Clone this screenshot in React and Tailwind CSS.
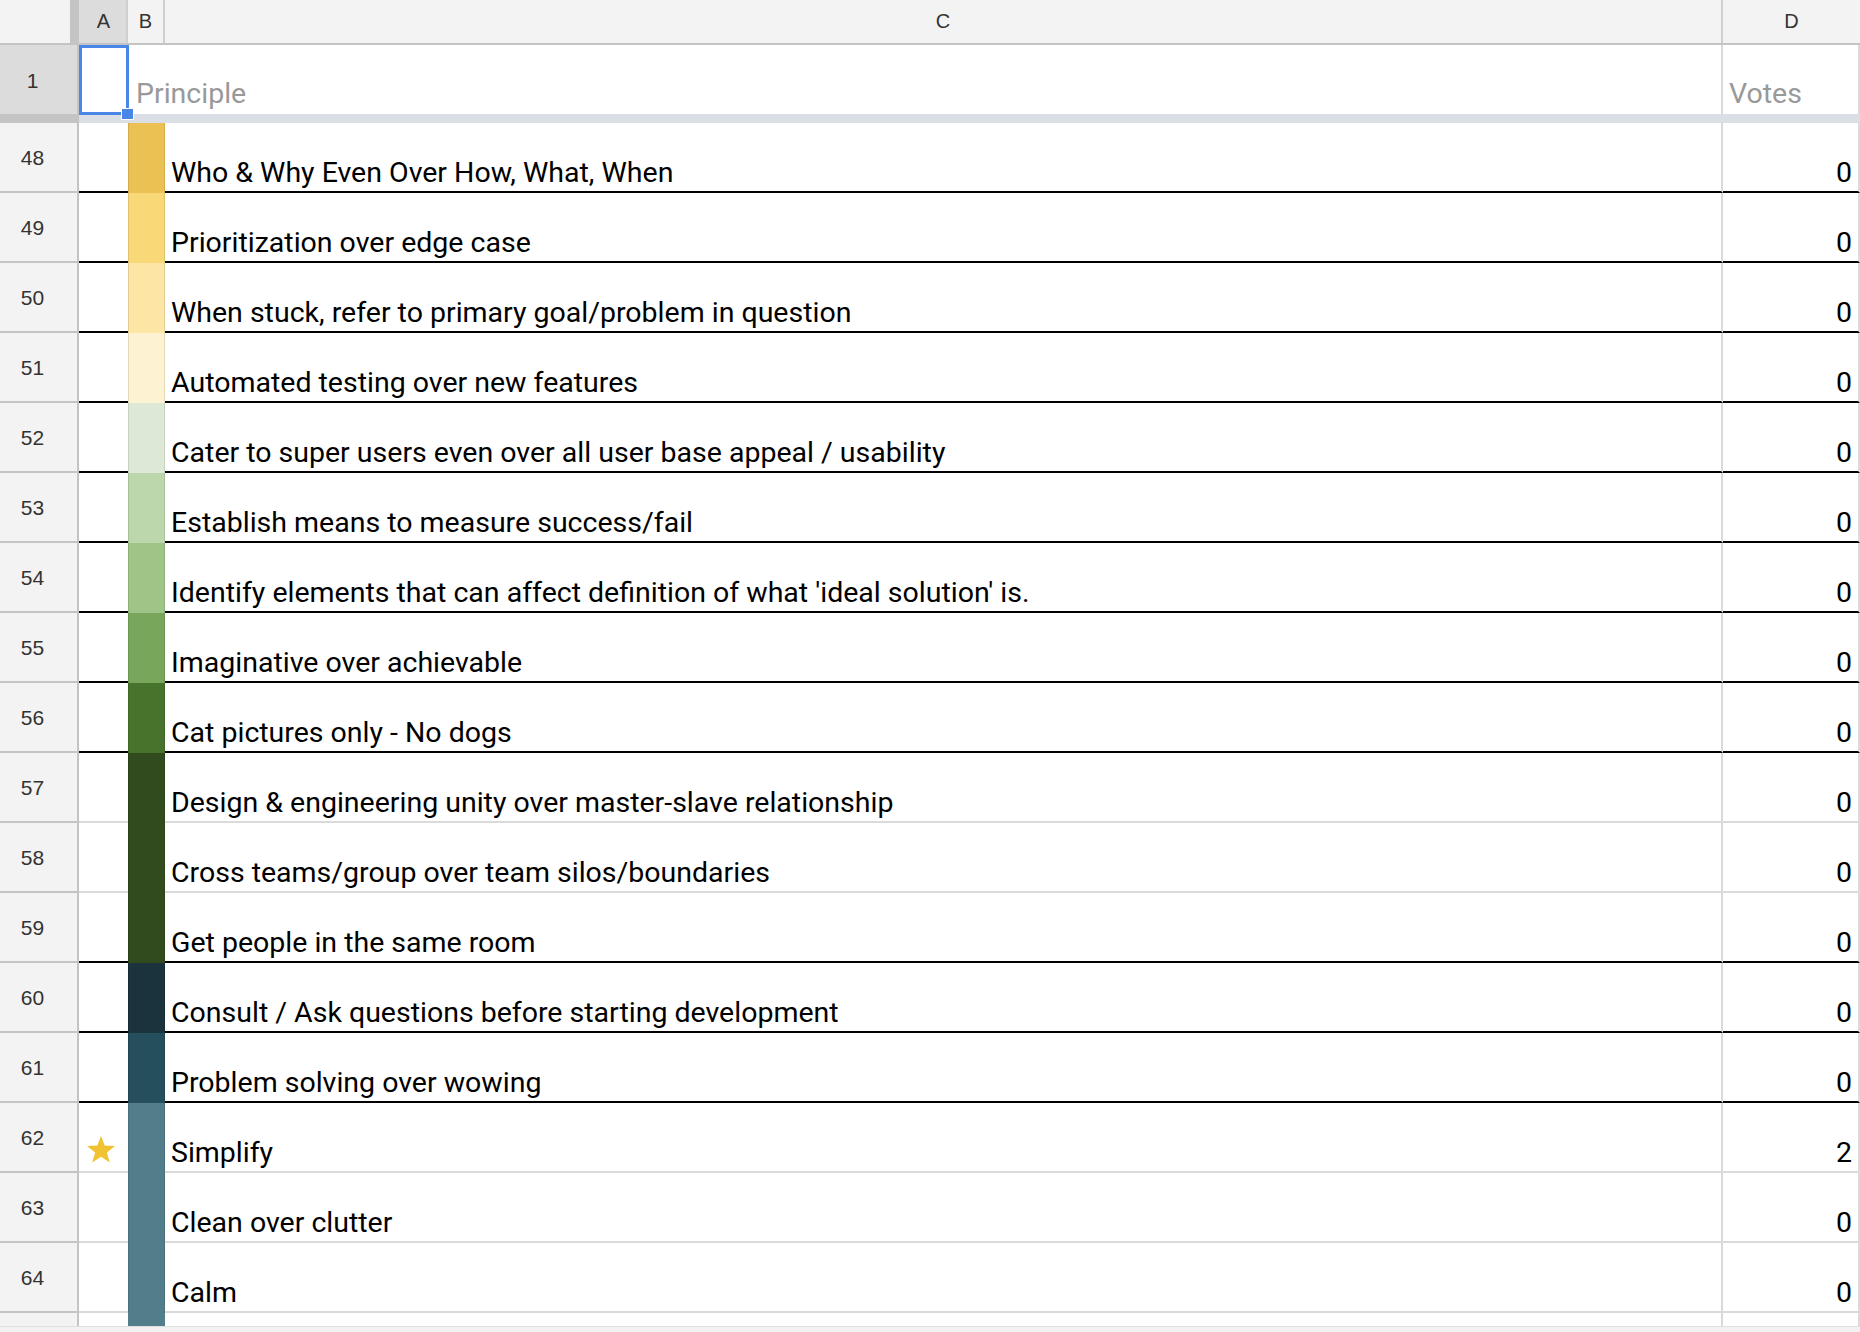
const rows = [
  { n: 48, color: "bg-[#ecc153]", text: "Who & Why Even Over How, What, When", votes: 0, dark: true },
  { n: 49, color: "bg-[#f9d877]", text: "Prioritization over edge case", votes: 0, dark: true },
  { n: 50, color: "bg-[#fce5a5]", text: "When stuck, refer to primary goal/problem in question", votes: 0, dark: true },
  { n: 51, color: "bg-[#fdf2d1]", text: "Automated testing over new features", votes: 0, dark: true },
  { n: 52, color: "bg-[#dde9d6]", text: "Cater to super users even over all user base appeal / usability", votes: 0, dark: true },
  { n: 53, color: "bg-[#bdd7ad]", text: "Establish means to measure success/fail", votes: 0, dark: true },
  { n: 54, color: "bg-[#9fc488]", text: "Identify elements that can affect definition of what 'ideal solution' is.", votes: 0, dark: true },
  { n: 55, color: "bg-[#78a65a]", text: "Imaginative over achievable", votes: 0, dark: true },
  { n: 56, color: "bg-[#47732d]", text: "Cat pictures only - No dogs", votes: 0, dark: true },
  { n: 57, color: "bg-[#324b1e]", text: "Design & engineering unity over master-slave relationship", votes: 0, dark: false },
  { n: 58, color: "bg-[#324b1e]", text: "Cross teams/group over team silos/boundaries", votes: 0, dark: false },
  { n: 59, color: "bg-[#324b1e]", text: "Get people in the same room", votes: 0, dark: true },
  { n: 60, color: "bg-[#1a333c]", text: "Consult / Ask questions before starting development", votes: 0, dark: true },
  { n: 61, color: "bg-[#254f5c]", text: "Problem solving over wowing", votes: 0, dark: true },
  { n: 62, color: "bg-[#527d8a]", text: "Simplify", votes: 2, dark: false, star: true },
  { n: 63, color: "bg-[#527d8a]", text: "Clean over clutter", votes: 0, dark: false },
  { n: 64, color: "bg-[#527d8a]", text: "Calm", votes: 0, dark: false },
];

function Star() {
  return (
    <svg width="30" height="29" viewBox="0 0 24 23">
      <polygon
        points="12,0.5 14.9,8.3 23.2,8.6 16.7,13.8 19,21.9 12,17.2 5,21.9 7.3,13.8 0.8,8.6 9.1,8.3"
        fill="#f1c232"
      />
    </svg>
  );
}

function Row({ r }) {
  const line = r.dark ? "border-black" : "border-[#dadada]";
  return (
    <div className="flex h-[70px] shrink-0">
      <div className="w-[79px] border-r-2 border-b-2 border-[#c4c4c4] bg-[#f3f3f3] flex items-center justify-center pr-[12px] pt-[2px] text-[21px] text-[#333] font-['Liberation_Sans',Arial,sans-serif]">
        {r.n}
      </div>
      <div className={`w-[49px] border-b-2 ${line} flex items-end pl-[7px] pb-[7px]`}>
        {r.star ? <Star /> : null}
      </div>
      <div className={`w-[37px] ${r.color} border-x border-black/10`} />
      <div className={`w-[1558px] border-b-2 ${line} border-r-2 border-r-[#dadada] flex items-end pl-[6px] text-[28.5px] leading-none text-black font-['Roboto',sans-serif] whitespace-nowrap`}>
        <span className="pb-[4px]">{r.text}</span>
      </div>
      <div className={`w-[137px] border-b-2 ${line} border-r-2 border-r-[#dadada] flex items-end justify-end pr-[6px] text-[28.5px] leading-none text-black font-['Roboto',sans-serif]`}>
        <span className="pb-[4px]">{r.votes}</span>
      </div>
    </div>
  );
}

export default function App() {
  return (
    <div className="w-[1860px] h-[1332px] overflow-hidden bg-white flex flex-col">
      {/* column letters */}
      <div className="flex h-[45px] shrink-0 border-b-2 border-[#c4c4c4] bg-[#f3f3f3] text-[20px] text-[#333] font-['Liberation_Sans',Arial,sans-serif]">
        <div className="w-[70px]" />
        <div className="w-[9px] bg-[#c4c4c4]" />
        <div className="w-[49px] bg-[#dcdcdc] border-r-2 border-[#cfcfcf] flex items-center justify-center pl-[2px] pb-[2px]">A</div>
        <div className="w-[37px] border-r-2 border-[#cfcfcf] flex items-center justify-center pb-[2px]">B</div>
        <div className="w-[1558px] border-r-2 border-[#cfcfcf] flex items-center justify-center pb-[2px]">C</div>
        <div className="w-[137px] flex items-center justify-center pb-[2px]">D</div>
      </div>

      {/* row 1 */}
      <div className="flex h-[69px] shrink-0">
        <div className="w-[79px] border-r-2 border-[#c4c4c4] bg-[#dcdcdc] flex items-center justify-center pr-[12px] pt-[2px] text-[21px] text-[#333] font-['Liberation_Sans',Arial,sans-serif]">
          1
        </div>
        <div className="relative w-[49px]">
          <div className="absolute left-0 top-0 w-[50px] h-[70px] border-[3px] border-[#4a86e8]" />
          <div className="absolute left-[42px] top-[63px] w-[13px] h-[12px] bg-[#4a86e8] border border-white z-10" />
        </div>
        <div className="w-[1595px] border-r-2 border-[#dadada] flex items-end pl-[8px] text-[28.5px] leading-none text-[#999] font-['Roboto',sans-serif]">
          <span className="pb-[6px]">Principle</span>
        </div>
        <div className="w-[137px] border-r-2 border-[#dadada] flex items-end pl-[6px] text-[28.5px] leading-none text-[#999] font-['Roboto',sans-serif]">
          <span className="pb-[6px]">Votes</span>
        </div>
      </div>

      {/* frozen divider */}
      <div className="flex h-[9px] shrink-0">
        <div className="w-[79px] bg-[#c4c4c4]" />
        <div className="flex-1 bg-[#dadfe6]" />
      </div>

      {rows.map((r) => (
        <Row key={r.n} r={r} />
      ))}

      {/* partial next row */}
      <div className="flex h-[13px] shrink-0">
        <div className="w-[79px] border-r-2 border-[#c4c4c4] bg-[#f3f3f3]" />
        <div className="w-[49px]" />
        <div className="w-[37px] bg-[#527d8a]" />
        <div className="w-[1558px] border-r-2 border-[#dadada]" />
        <div className="w-[137px] border-r-2 border-[#dadada]" />
      </div>
      <div className="flex-1 bg-[#f1f1f1] border-t border-[#e0e0e0]" />
    </div>
  );
}
